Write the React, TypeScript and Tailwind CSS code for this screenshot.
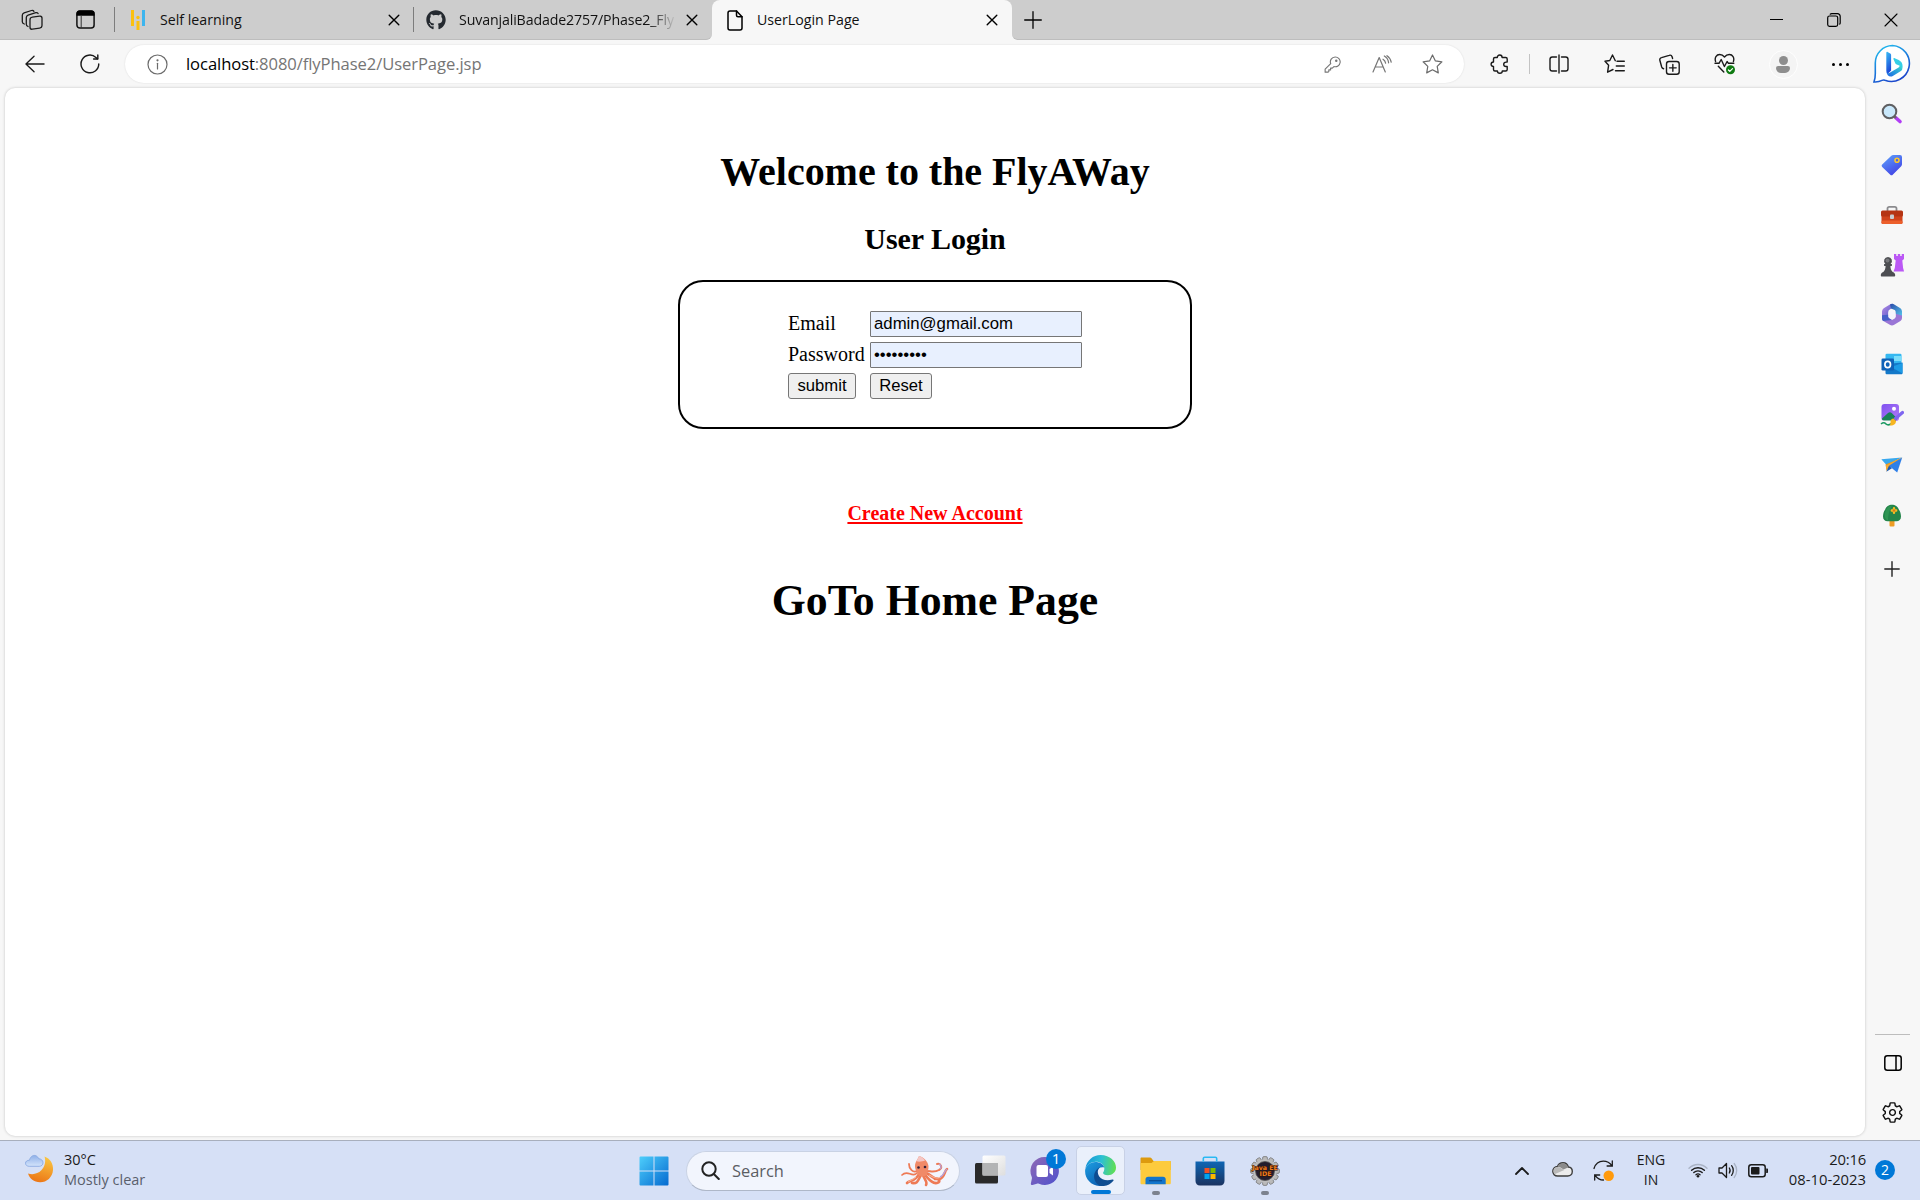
import React from "react";
import type { ReactNode } from "react";
import { FaGithub } from "react-icons/fa";
import { IoSettingsOutline } from "react-icons/io5";

const SANS = "font-['Open_Sans','Noto_Sans',sans-serif]";
const SERIF = "font-['Liberation_Serif',serif]";
const ARIAL = "font-['Liberation_Sans',sans-serif]";

type IconProps = { w: number; h?: number; box: string; children: ReactNode; sw?: number; className?: string };

/* Outline icon drawn with the current text colour. */
function Line({ w, h = w, box, children, sw = 1.4, className = "" }: IconProps) {
  return (
    <svg
      width={w}
      height={h}
      viewBox={box}
      fill="none"
      stroke="currentColor"
      strokeWidth={sw}
      strokeLinecap="round"
      strokeLinejoin="round"
      className={`block shrink-0 ${className}`}
    >
      {children}
    </svg>
  );
}

function Slot({ className, children }: { className: string; children: ReactNode }) {
  return <div className={`flex h-full shrink-0 items-center justify-center ${className}`}>{children}</div>;
}

function TabClose() {
  return (
    <Line w={12} box="0 0 12 12" sw={1.4} className="text-black">
      <path d="M1.2 1.2l9.600 9.600M10.800 1.200L1.200 10.800" />
    </Line>
  );
}

function TabStrip() {
  return (
    <div className="flex h-10 w-full shrink-0 bg-[#f7f7f7]">
      <div className="flex h-full w-[712px] shrink-0 items-center rounded-br-[6px] border-b border-[#bdbdbd] bg-[#cdcdcd]">
        <Slot className="w-[42px] ml-[11px]">
          <Line w={22} box="0 0 22 22" sw={1.3} className="text-[#1b1b1b]">
            <rect x="9" y="7.5" width="12" height="12" rx="2.4" transform="skewY(-8) translate(0 2.3)" />
            <path d="M7 17.5C5.7 17 5.3 16.400 5.300 15.300V8.600c0-1.300.6-2 1.800-2.400l7.700-2.500c1-.3 1.800 0 2.300.8" />
            <path d="M3.300 15C1.900 14.600 1.300 13.900 1.300 12.700V6.300c0-1.300.6-2 1.800-2.400L10.500 1.500c1-.3 1.900 0 2.400.9" />
          </Line>
        </Slot>
        <Slot className="w-[42px] ml-[11px]">
          <svg width="19" height="19" viewBox="0 0 19 19" className="block">
            <rect x=".9" y=".9" width="17.200" height="17.200" rx="3" fill="none" stroke="#111" strokeWidth="1.500" />
            <path d="M.5 5.800V3.500A3 3 0 0 1 3.500.5h12a3 3 0 0 1 3 3v2.300z" fill="#000" />
            <path d="M5.200 6v12" stroke="#333" strokeWidth="1" />
          </svg>
        </Slot>
        <div className="ml-2 h-[25px] w-px bg-[#7d7d7d]" />
        <svg width="14" height="22" viewBox="0 0 14 22" className="ml-4 block">
          <rect x="0" y="1" width="3" height="16" fill="#fcc10f" />
          <rect x="11" y="1" width="3" height="16" fill="#3db5ee" />
          <rect x="5.500" y="12" width="3" height="9" fill="#fcc10f" />
          <circle cx="7" cy="8.500" r="1.700" fill="#fcc10f" />
        </svg>
        <div className={`${SANS} ml-[15px] w-[228px] text-[14.2px] leading-5 text-[#111]`}>Self learning</div>
        <TabClose />
        <div className="ml-[13px] h-[25px] w-px bg-[#7d7d7d]" />
        <FaGithub size={20} color="#24292f" className="ml-[12px] shrink-0" />
        <div
          className={`${SANS} ml-[13px] w-[217px] whitespace-nowrap text-[14.2px] leading-5 tracking-[-0.13px] text-[#111] [mask-image:linear-gradient(to_right,#000_88%,transparent)]`}
        >
          SuvanjaliBadade2757/Phase2_Fly
        </div>
        <div className="ml-[10px]">
          <TabClose />
        </div>
      </div>
      <div className="h-full w-[300px] shrink-0 bg-[linear-gradient(#cdcdcd_50%,#f7f7f7_50%)]">
        <div className="flex h-full items-center rounded-t-[8px] bg-[#f7f7f7]">
          <Line w={16} h={21} box="0 0 16 21" sw={1.5} className="ml-[15px] text-black">
            <path d="M3 1h6.500L15 6.800V18a2 2 0 0 1-2 2H3a2 2 0 0 1-2-2V3a2 2 0 0 1 2-2z" />
            <path d="M9.500 1v4.300c0 .9.600 1.500 1.500 1.500h4" />
          </Line>
          <div className={`${SANS} ml-[14px] w-[229px] text-[14.2px] leading-5 text-[#111]`}>UserLogin Page</div>
          <TabClose />
        </div>
      </div>
      <div className="flex h-full flex-1 items-center rounded-bl-[6px] border-b border-[#bdbdbd] bg-[#cdcdcd]">
        <Line w={18} box="0 0 18 18" sw={1.3} className="ml-[12px] text-black">
          <path d="M9 .7v16.600M.7 9h16.600" />
        </Line>
        <div className="flex-1" />
        <Slot className="w-[57px]">
          <div className="h-[1.5px] w-[13px] bg-black" />
        </Slot>
        <Slot className="w-[57px]">
          <Line w={14} box="0 0 14 14" sw={1.2} className="text-black">
            <rect x=".7" y="3" width="10" height="10.300" rx="1.800" />
            <path d="M3.200 1.200c.5-.4.900-.5 1.500-.5h5.800A2.700 2.700 0 0 1 13.200 3.400v6.300c0 .6-.2 1-.5 1.400" />
          </Line>
        </Slot>
        <Slot className="w-[58px]">
          <Line w={14} box="0 0 14 14" sw={1.1} className="text-black">
            <path d="M1 1l12 12M13 1L1 13" />
          </Line>
        </Slot>
      </div>
    </div>
  );
}

function BingLogo() {
  return (
    <svg width="40" height="40" viewBox="0 0 40 40" className="block">
      <defs>
        <linearGradient id="bRing" x1="0" y1="0" x2=".5" y2="1">
          <stop offset="0" stopColor="#22c7f0" />
          <stop offset=".6" stopColor="#1a78dc" />
          <stop offset="1" stopColor="#1c49cc" />
        </linearGradient>
        <linearGradient id="bStem" x1="0" y1="0" x2=".3" y2="1">
          <stop offset="0" stopColor="#38bdf6" />
          <stop offset="1" stopColor="#1b48d8" />
        </linearGradient>
        <linearGradient id="bBody" x1="0" y1="1" x2="1" y2="0">
          <stop offset="0" stopColor="#1c63e6" />
          <stop offset="1" stopColor="#38dcd0" />
        </linearGradient>
      </defs>
      <path
        d="M20.500 1.500a18 18 0 1 1-7.500 34.800c-1.200-.5-2-.4-3 .1-2.300 1.200-5 1.700-8 1.500 1-2.600 1.300-5 1.300-8.400V19A17.500 17.500 0 0 1 20.500 1.500z"
        fill="#fff"
        stroke="url(#bRing)"
        strokeWidth="1.600"
      />
      <path d="M14.300 8.700c0-.8.700-1 1.300-.7l2.600 1.500c.7.400.9.800.9 1.600v15.500l-3.300 3.200c-1.200-.8-1.500-2-1.500-3.600z" fill="url(#bStem)" />
      <path d="M21.500 15.300c-.3-.9.400-1.400 1.200-1.100l4 1.900c2.700 1.300 3.900 3.500 3.900 6.100 0 .9-.1 1.700-.4 2.300-.9-1.900-2-2.600-3.600-3.300l-2.400-1c-.6-.2-.8-.6-1-1.100z" fill="#35cfe6" />
      <path d="M14.500 27.500c.5 1.700 1.900 2 3.200 1.300l8.500-5c1-.6 1.500-1.600 1.400-2.300 1.600.6 2.800 1.900 2.700 3.200-.1 1-.7 1.900-1.800 2.600l-7.700 4.600c-2.700 1.600-6.300-.2-6.300-4.400z" fill="url(#bBody)" />
    </svg>
  );
}

function Toolbar() {
  return (
    <div className="flex h-12 w-full shrink-0 items-center bg-[#f7f7f7] text-[#1a1a1a]">
      <Slot className="w-[50px] ml-[10px]">
        <Line w={20} h={18} box="0 0 21 18" sw={1.4}>
          <path d="M20 9H1M9.500.8L1 9l8.500 8.200" />
        </Line>
      </Slot>
      <Slot className="w-[50px] ml-[5px]">
        <Line w={20} box="0 0 21 21" sw={1.5}>
          <path d="M19.700 10.500A9.300 9.300 0 1 1 16.700 3.600l1.700 1.500" />
          <path d="M18.700 1v4.300h-4.400" />
        </Line>
      </Slot>
      <div className="ml-[10px] flex h-[38px] w-[1339px] items-center rounded-full bg-white shadow-[0_0_2px_rgba(0,0,0,0.12)]">
        <Line w={21} box="0 0 21 21" sw={1.2} className="ml-[22px] text-[#6b6b6b]">
          <circle cx="10.500" cy="10.500" r="9.500" />
          <path d="M10.500 9.300v5.700" />
          <circle cx="10.500" cy="6.300" r=".5" fill="currentColor" />
        </Line>
        <div className={`${SANS} ml-[18px] flex-1 whitespace-nowrap text-[16.6px] leading-6 tracking-[-0.08px] text-[#757575]`}>
          <span className="text-black">localhost</span>:8080/flyPhase2/UserPage.jsp
        </div>
        <Slot className="w-[50px]">
          <Line w={17} box="0 0 18 18" sw={1.2} className="text-[#767676]">
            <path d="M11.800 1A5.200 5.200 0 1 1 10.500 11.200L8.800 12.800H7v1.900H5.100v1.800l-.7.600H1.200V14l5.900-5.900A5.200 5.200 0 0 1 11.800 1z" />
            <circle cx="13" cy="5" r=".7" fill="currentColor" />
          </Line>
        </Slot>
        <Slot className="w-[50px]">
          <Line w={20} h={18} box="0 0 20 18" sw={1.2} className="text-[#767676]">
            <path d="M1 17L7.200 2.500 13.300 17M3.300 12h7.800" />
            <path d="M11 4.200c1.500.9 2.300 2.200 2.600 4M12.300 1c2.500 1.400 4 3.700 4.300 6.800M15 .7c2.300 1.500 3.700 3.700 4.200 6.500" />
          </Line>
        </Slot>
        <Slot className="w-[50px] mr-[7px]">
          <Line w={21} h={20} box="0 0 21 20" sw={1.2} className="text-[#6b6b6b]">
            <path d="M10.500 1l2.900 5.900 6.500.9-4.700 4.600 1.100 6.500-5.800-3.100-5.800 3.100 1.100-6.500L1.100 7.800l6.500-.9z" />
          </Line>
        </Slot>
      </div>
      <Slot className="w-[50px] ml-[11px]">
        <Line w={20} box="0 0 20 20" sw={1.4}>
          <path d="M7.300 3.500C7.300 2 8.300 1 9.700 1s2.400 1 2.400 2.500h3.600c.9 0 1.500.6 1.500 1.500v3.100h-1.100c-1.500 0-2.400.9-2.400 2.200s.9 2.200 2.400 2.200h1.100v3c0 .9-.6 1.500-1.500 1.500h-3.400c0 1.300-1 2.200-2.400 2.200s-2.500-.9-2.500-2.200H5c-.9 0-1.500-.6-1.500-1.500v-3c-1.400 0-2.400-.9-2.400-2.300S2.100 8 3.500 8V5c0-.9.600-1.500 1.500-1.500z" />
        </Line>
      </Slot>
      <div className="ml-[4px] h-5 w-px bg-[#c3c3c3]" />
      <Slot className="w-[50px] ml-[4px]">
        <Line w={20} box="0 0 20 20" sw={1.4}>
          <path d="M7.500 3H3.300C2 3 1 4 1 5.300v9.400C1 16 2 17 3.300 17h4.200M12.500 3h4.200C18 3 19 4 19 5.300v9.400c0 1.300-1 2.300-2.300 2.300h-4.200" />
          <path d="M10 1v18" />
        </Line>
      </Slot>
      <Slot className="w-[55px] ml-[3px]">
        <Line w={21} h={20} box="0 0 21 20" sw={1.4}>
          <path d="M11.300 6.900L9 6.600 7.200 2.300c-.3-.7-1-.7-1.300 0L5.300 6.300l-4.200.9 3.200 4.300-.8 6.500 5.200-2.500" className="hidden" />
          <path d="M11.300 6.700L8.500 1 5.800 6.500 1 7.300l3.600 4-1 6.900L9 15.500" />
          <path d="M13 7.200h7.300M12.300 12h8M11.500 16.800h8.800" />
        </Line>
      </Slot>
      <Slot className="w-[55px]">
        <Line w={21} box="0 0 21 21" sw={1.4}>
          <rect x="7.500" y="7.500" width="12.700" height="12.700" rx="2.500" />
          <path d="M13.850 10.500v6.700M10.500 13.850h6.700" />
          <path d="M4.600 14.700A2.500 2.500 0 0 1 2.700 13L.9 6.500a2.300 2.300 0 0 1 1.600-2.900L10.200 1.300A2.300 2.300 0 0 1 13.100 2.700l.5 1.800" />
        </Line>
      </Slot>
      <Slot className="w-[55px]">
        <Line w={22} h={22} box="0 0 22 22" sw={1.4}>
          <path d="M1.600 8.500C.3 4.600 2.400 1.500 5.700 1.500c2 0 3.500.9 4.800 2.500 1.300-1.600 2.800-2.500 4.800-2.500 3.300 0 5.400 3.100 4.100 7" />
          <path d="M1 10.300h4l2.200-3.800 3.200 7 2.700-5 1.300 1.800h5.400M4.300 13.300l5.500 5.700" />
          <circle cx="16.500" cy="16.800" r="4.500" fill="#0f7b12" stroke="none" />
          <path d="M14.400 17l1.400 1.400 2.700-2.800" stroke="#fff" strokeWidth="1.200" />
        </Line>
      </Slot>
      <Slot className="w-[62px]">
        <div className="flex h-[29px] w-[29px] flex-col items-center justify-center gap-[1px] rounded-full border border-white bg-[#f4f4f4]">
          <div className="h-[9px] w-[9px] rounded-full bg-[#8e8e8e]" />
          <div className="h-[7px] w-[14px] rounded-t-[3px] rounded-b-[7px] bg-[#8e8e8e]" />
        </div>
      </Slot>
      <Slot className="w-[53px] gap-[4px]">
        <div className="h-[3px] w-[3px] rounded-full bg-black" />
        <div className="h-[3px] w-[3px] rounded-full bg-black" />
        <div className="h-[3px] w-[3px] rounded-full bg-black" />
      </Slot>
      <Slot className="w-10 ml-[5px]">
        <BingLogo />
      </Slot>
    </div>
  );
}

function FieldBox({ children }: { children: ReactNode }) {
  return (
    <div
      className={`${ARIAL} flex h-[26px] items-center rounded-[1px] border border-[#767676] bg-[#e8f0fe] pb-[2px] pl-[3px] text-[16.75px] leading-[19px] text-black`}
    >
      {children}
    </div>
  );
}

function PushButton({ children, className }: { children: ReactNode; className: string }) {
  return (
    <button
      className={`${ARIAL} h-[26px] rounded-[3px] border border-[#767676] bg-[#efefef] pb-[2px] text-[16.67px] leading-[19px] text-black ${className}`}
    >
      {children}
    </button>
  );
}

function LoginPage() {
  return (
    <div className={`${SERIF} flex h-[1048px] w-[1860px] flex-col items-center rounded-[10px] bg-white text-black shadow-[0_0_3px_rgba(0,0,0,0.22)]`}>
      <h1 className="mt-[61px] text-[40px] font-bold leading-[46px] tracking-[-0.03px]">Welcome to the FlyAWay</h1>
      <h2 className="mt-[27px] text-[30px] font-bold leading-[34px] tracking-[-0.05px]">User Login</h2>
      <div className="mt-[24px] flex h-[149px] w-[514px] justify-center rounded-[25px] border-2 border-black pt-[29px]">
        <div className="grid h-[88px] w-[294px] grid-cols-[77px_212px] grid-rows-[26px_26px_26px] gap-[5px] text-[20px] leading-[25px]">
          <label>Email</label>
          <FieldBox>admin@gmail.com</FieldBox>
          <label>Password</label>
          <FieldBox>•••••••••</FieldBox>
          <PushButton className="w-[68px]">submit</PushButton>
          <PushButton className="w-[62px]">Reset</PushButton>
        </div>
      </div>
      <a className="mt-[73px] text-[20px] font-bold leading-[23px] text-[#ff0000] underline decoration-2 underline-offset-2">Create New Account</a>
      <div className="mt-[50px] text-[43.75px] font-bold leading-[50px]">GoTo Home Page</div>
    </div>
  );
}

function SideIcons() {
  return (
    <>
      <Slot className="!h-[50px]">
        <svg width="22" height="22" viewBox="0 0 22 22">
          <path d="M14.500 14.500l4.500 4" stroke="#b13df5" strokeWidth="3.600" strokeLinecap="round" />
          <path d="M12 12l3 3" stroke="#666" strokeWidth="2.400" />
          <circle cx="8.500" cy="8.500" r="6.800" fill="#c9e8fb" stroke="#5f5f62" strokeWidth="2" />
        </svg>
      </Slot>
      <Slot className="!h-[51px]">
        <svg width="22" height="22" viewBox="0 0 22 22">
          <defs>
            <linearGradient id="tag" x1="0" y1="0" x2=".6" y2="1">
              <stop offset="0" stopColor="#5ea5fb" />
              <stop offset="1" stopColor="#4345e6" />
            </linearGradient>
          </defs>
          <path d="M12.500 1H19a2 2 0 0 1 2 2v7.300c0 .8-.3 1.400-.8 1.900l-8.500 8.500c-.7.700-1.700.7-2.400 0L1.200 13c-.7-.7-.7-1.700 0-2.400l8.600-8.400C10.600 1.400 11.400 1 12.500 1z" fill="url(#tag)" />
          <circle cx="16" cy="6.300" r="2" fill="#4b62e8" stroke="#fbc72d" strokeWidth="1.600" />
        </svg>
      </Slot>
      <Slot className="!h-[50px]">
        <svg width="24" height="20" viewBox="0 0 24 20">
          <path d="M7.500 6V3.500c0-1 .7-1.700 1.700-1.700h5.600c1 0 1.700.7 1.700 1.700V6" fill="none" stroke="#8b8b8e" strokeWidth="1.800" />
          <rect x="1.500" y="9" width="21" height="10" rx="1.500" fill="#d0431b" />
          <rect x="1" y="5.500" width="22" height="6" rx="1.500" fill="#b53413" />
          <rect x="1.500" y="15.500" width="21" height="3.500" rx="1.500" fill="#ec5f2b" />
          <rect x="10" y="9.500" width="4" height="4.500" rx="1" fill="#c9cdd1" />
        </svg>
      </Slot>
      <Slot className="!h-[49px]">
        <svg width="24" height="24" viewBox="0 0 24 24">
          <path d="M14 1h2.300v2h1.500V1h2.400v2h1.500V1H24v5l-1.700 1.500.8 7.500 1 3.500H13.500l1.300-3.500.9-7.500L14 6z" fill="#bb58f5" />
          <path d="M8 4a4 4 0 0 1 2.600 7h1.300v2h-1.500c.1 2.700.7 4.500 2.300 6 1.700.7 2.500 1.700 2.500 3.200 0 .8-.4 1.300-1.200 1.300H2c-.8 0-1.200-.5-1.200-1.300 0-1.500.8-2.500 2.500-3.200 1.600-1.500 2.200-3.300 2.300-6H4.100v-2h1.300A4 4 0 0 1 8 4z" fill="#4d4e52" />
          <circle cx="7.500" cy="7.500" r="2" fill="#77787c" />
        </svg>
      </Slot>
      <Slot className="!h-[50px]">
        <svg width="22" height="23" viewBox="0 0 22 23">
          <defs>
            <linearGradient id="mA" x1="0" y1="0" x2="1" y2="1">
              <stop offset="0" stopColor="#b98be8" />
              <stop offset="1" stopColor="#3a4ebc" />
            </linearGradient>
            <linearGradient id="mB" x1="0" y1="0" x2="1" y2="1">
              <stop offset="0" stopColor="#2a4ba8" />
              <stop offset="1" stopColor="#53c1ea" />
            </linearGradient>
          </defs>
          <path d="M11.500.8c-1 0-1.800.2-2.600.7L2.700 5.300A4 4 0 0 0 1 8.500v6.800c0 1.200.5 2 1.300 2.700l5-2.500V8.700c0-.9.400-1.500 1.100-1.900L14.500 3z" fill="url(#mA)" />
          <path d="M21 8.200l-6.400 1v4.500c0 .8-.3 1.300-.9 1.700L11 17l-3.700-2.600-6 .5c0 1.300.3 2.300 1 3.100l6.500 3.800a4.300 4.300 0 0 0 4.400 0l6.200-3.700a4 4 0 0 0 1.600-3.200z" fill="#9a76d6" />
          <path d="M9 1.400a4.300 4.300 0 0 1 4.200 0l6.200 3.800A4 4 0 0 1 21 8.500v4l-6.400-1.800V8.600c0-.8-.3-1.300-.9-1.700L10 5.500z" fill="url(#mB)" />
          <path d="M2.300 18C1.500 17.200 1 16.200 1 15.200v-3l6.300-.5v2.200c0 .7.300 1.300.9 1.600l2.500 1.500z" fill="#4560c8" />
          <path d="M11 7.500l3.600 2v4.200L11 16l-3.600-2.300V9.500z" fill="#f4f4fb" />
        </svg>
      </Slot>
      <Slot className="!h-[50px]">
        <svg width="22" height="22" viewBox="0 0 22 22">
          <rect x="4.500" y=".8" width="16" height="12" rx="1.300" fill="#35b8f1" />
          <rect x="13" y="3" width="7.500" height="5" fill="#7addfb" />
          <path d="M4.500 11L21.500 9.500V20c0 .8-.5 1.300-1.300 1.300H6c-.8 0-1.500-.5-1.500-1.300z" fill="#1479c9" />
          <path d="M21.500 10v10.500L10 14z" fill="#1c9be6" />
          <rect x=".5" y="5.500" width="12.500" height="12" rx="1.300" fill="#0f62b8" />
          <ellipse cx="6.700" cy="11.500" rx="2.800" ry="3.100" fill="none" stroke="#fff" strokeWidth="1.700" />
        </svg>
      </Slot>
      <Slot className="!h-[51px]">
        <svg width="24" height="24" viewBox="0 0 24 24">
          <defs>
            <linearGradient id="pic" x1="0" y1="0" x2="1" y2="1">
              <stop offset="0" stopColor="#8052f0" />
              <stop offset="1" stopColor="#b07af6" />
            </linearGradient>
          </defs>
          <rect x="1.500" y="1" width="17.500" height="17" rx="3" fill="url(#pic)" />
          <circle cx="14" cy="5.700" r="2" fill="#fff" />
          <path d="M2 15.500l6-5.500c1.200-1 2.500-1 3.700 0l5.500 5.500-2 2.500H4.500C3 18 2 17 2 15.500z" fill="#178257" />
          <path d="M0 17.500h13v6H0z" fill="#f7f7f7" />
          <path d="M1 21c3-2.500 4-1 5 0s3.500 1.500 5-.5" fill="none" stroke="#1b9a62" strokeWidth="1.600" />
          <path d="M15.500 15.500L22.500 9.500" stroke="#7f66f0" strokeWidth="3.200" strokeLinecap="round" />
          <path d="M10.500 19c0-2.500 1.500-3.500 3-3.500l2.500 2.500c0 3-2.500 5-6.500 4.500 1-1 1-2 1-3.500z" fill="#f7b520" />
        </svg>
      </Slot>
      <Slot className="!h-[50px]">
        <svg width="23" height="18" viewBox="0 0 23 18">
          <path d="M1.300 3.200L22 1.500 6.500 9z" fill="#38a8ee" />
          <path d="M22.200 1.500L5.500 8.500l1 5.500z" fill="#e89520" />
          <path d="M22.200 1.500L9 9.500 6.300 15.500 6 9.500z" fill="#f4ac33" />
          <path d="M22.200 1.500L9 9.800l8.200 6.700z" fill="#2d7fe8" />
          <path d="M9 9.800l3 2.500-5.700 3.500z" fill="#1a5cb8" />
        </svg>
      </Slot>
      <Slot className="!h-[50px]">
        <svg width="20" height="23" viewBox="0 0 20 23">
          <rect x="7.500" y="15" width="5" height="7.500" rx="1" fill="#ee9d25" />
          <path d="M10 .8c3 0 6 2 6.800 4.700 1.500 2 2.200 4.500 2.200 7 0 3.300-2 4.700-4.500 4.700h-9C3 17.200 1 15.800 1 12.500c0-2.500.7-5 2.200-7C4 2.800 7 .8 10 .8z" fill="#23854a" />
          <path d="M3.500 7C5 3.500 7 2 10 1.500 8 5 6 10 6 16.500 3 15.500 2 12 3.500 7z" fill="#2f9553" />
          <path d="M12 4.300v4.400M9.800 6.500h4.400" stroke="#f6bc23" strokeWidth="2.400" strokeLinecap="round" />
          <circle cx="12" cy="6.500" r="1.200" fill="#d5791d" />
        </svg>
      </Slot>
      <Slot className="!h-[57px]">
        <Line w={16} box="0 0 16 16" sw={1.4} className="text-[#222]">
          <path d="M8 .8v14.400M.8 8h14.400" />
        </Line>
      </Slot>
    </>
  );
}

function Sidebar() {
  return (
    <div className="ml-[10px] flex h-[1048px] w-[35px] flex-col items-center">
      <div className="flex w-[33px] flex-col self-start pt-[1px]">
        <SideIcons />
      </div>
      <div className="flex-1" />
      <div className="h-px w-[35px] bg-[#bdbdbd]" />
      <Slot className="!h-[55px]">
        <Line w={18} h={16} box="0 0 18 16" sw={1.5} className="text-black">
          <rect x=".8" y=".8" width="16.400" height="14.400" rx="2.500" />
          <path d="M12 1v14" />
        </Line>
      </Slot>
      <Slot className="!h-[45px]">
        <IoSettingsOutline size={23} color="#111" />
      </Slot>
      <div className="h-[1px]" />
    </div>
  );
}

function EdgeLogo() {
  return (
    <svg width="31" height="31" viewBox="0 0 30 30" className="block">
      <defs>
        <linearGradient id="eTop" x1="0" y1=".5" x2="1" y2=".6">
          <stop offset="0" stopColor="#1695d8" />
          <stop offset=".5" stopColor="#2cc0d4" />
          <stop offset="1" stopColor="#62e04e" />
        </linearGradient>
        <linearGradient id="eLeft" x1="0" y1="0" x2=".6" y2="1">
          <stop offset="0" stopColor="#1e9fe2" />
          <stop offset="1" stopColor="#0c62b4" />
        </linearGradient>
        <linearGradient id="eDark" x1="0" y1="0" x2="1" y2="1">
          <stop offset="0" stopColor="#0b4c92" />
          <stop offset="1" stopColor="#124e90" />
        </linearGradient>
      </defs>
      <path d="M.3 13.500C1.500 5 8 0 15 0c9.500 0 15 6.500 15 12 0 4.500-3.500 7.500-7.800 7.500-3.200 0-4.700-1.200-4.700-2.200 0-.9 1.200-1.300 1.200-4.300 0-4-4-6.500-8.200-6.500-4.500 0-8.500 2.700-10.200 7z" fill="url(#eTop)" />
      <path d="M.2 14C1.500 9.500 5.500 6.700 10 6.700c4.300 0 8 2 8.700 5.500-3.700-1-6.500 1-7 4C11 21 14 27 18.500 29.600 8 32-1 24 .2 14z" fill="url(#eLeft)" />
      <path d="M14.500 11.800c-2.700 2.500-2.700 6-.9 8.700 2.500 3.500 7.200 4.800 12.900 3.200.9-.3 1.500.4 1 1.100C24.500 28.500 20 30.500 15.500 30c-4.500-1.500-7-5.500-6.700-10 .3-3.700 2.700-7 5.700-8.200z" fill="url(#eDark)" />
    </svg>
  );
}

function Octopus() {
  return (
    <svg width="49" height="32" viewBox="0 0 49 32" className="block">
      <g fill="none" stroke="#ee7a55" strokeWidth="2.600" strokeLinecap="round">
        <path d="M18 17C12 24 8 14 2 20" strokeWidth="1.700" />
        <path d="M19 19c-4 8-9 6-12 9" />
        <path d="M21 20c-3 5-3 9-9 8" />
        <path d="M25 20c4 4 7 9 12 8s1-6-2-4" />
        <path d="M26 18c6 2 7 7 13 6s5-8 8-10" />
        <path d="M26 16c5 0 8 2 13-1 4-2 2-7-2-6" strokeWidth="2" />
        <path d="M17 16C13 18 9 14 9 9" strokeWidth="1.800" />
        <path d="M23 20c1 4 5 7 3 10" />
      </g>
      <path d="M19 1c4 1 9 5 9.500 10 .3 4-1.500 6-2 9-2 2-7 2-9-1-.5-3-2.500-4-2.500-8 0-4 3-7 4-10z" fill="#f08a68" />
      <path d="M19 1c3 1 5 2.500 6 4.500-2 1-6 1.500-8.500.8C17.500 4 18.500 3 19 1z" fill="#f5c6c4" />
      <circle cx="18.500" cy="12.500" r="1.300" fill="#33203a" />
      <circle cx="25" cy="12" r="1.300" fill="#33203a" />
      <path d="M29 20c6 3 8 4 12 2M8 27c3-2 6-3 8-5" stroke="#f9b79b" strokeWidth="1" fill="none" />
      <path d="M40 22c4-1 4-6 7-8M39 9c2 1 3 3 1 5" stroke="#b7a1d8" strokeWidth="1.300" fill="none" />
    </svg>
  );
}

function JavaGear() {
  return (
    <svg width="30" height="30" viewBox="0 0 30 30" className="block">
      <g fill="#b9b9b9" stroke="#6f6f6f" strokeWidth=".7">
        {[0, 30, 60, 90, 120, 150].map((a) => (
          <rect key={a} x="12.600" y=".6" width="4.800" height="28.800" rx="1.300" transform={`rotate(${a} 15 15)`} />
        ))}
      </g>
      <circle cx="15" cy="15" r="11.800" fill="#bdbdbd" />
      <circle cx="15" cy="15" r="9.500" fill="#241d2c" stroke="#555" strokeWidth=".8" />
      <g fill="#ee7a1b" stroke="#2b1407" strokeWidth=".8" paintOrder="stroke" textAnchor="middle" fontFamily="DejaVu Sans" fontWeight="700">
        <text x="15" y="13.800" fontSize="6.300">Java EE</text>
        <text x="15.500" y="20.300" fontSize="6.300">IDE</text>
      </g>
    </svg>
  );
}

function Taskbar() {
  return (
    <div className={`${SANS} flex h-[60px] w-full shrink-0 items-center border-t border-[#a8afbd] bg-[#d6e0f6] text-[#1b1b1b]`}>
      <svg width="29" height="29" viewBox="0 0 29 29" className="mb-[4px] ml-[25px] block">
        <defs>
          <linearGradient id="moon" x1=".7" y1="0" x2=".4" y2="1">
            <stop offset="0" stopColor="#f9c642" />
            <stop offset="1" stopColor="#ec7616" />
          </linearGradient>
          <linearGradient id="cl" x1="0" y1="0" x2="0" y2="1">
            <stop offset="0" stopColor="#8fb0e8" />
            <stop offset="1" stopColor="#d4e4fb" />
          </linearGradient>
        </defs>
        <path d="M19.500 2.500C25 4.500 28.500 9.500 28 16 27.500 23.500 21.500 28.500 15 28.300 9 28 4.500 24.500 3 19.500c5 1.500 10 .3 13.300-3.200 3.700-4 4.700-8.800 3.200-13.800z" fill="url(#moon)" />
        <path d="M4.500 6.200C5.300 2.500 8 1 10 1.500c2 .3 3 1.700 3.700 3.200 2.300 0 4.300 1.700 4.300 4 0 2-1.500 3.600-3.700 3.600H4.200C2 12.300.5 11 .5 9.200c0-1.700 1.500-3 4-3z" fill="url(#cl)" stroke="#83a4e0" strokeWidth=".8" />
      </svg>
      <div className="mb-[2px] ml-[10px] w-[566px] text-[14.5px] leading-5">
        <div>30°C</div>
        <div className="text-[#5a5f6c]">Mostly clear</div>
      </div>
      <svg width="30" height="30" viewBox="0 0 30 30" className="ml-[9px] block">
        <defs>
          <linearGradient id="win" gradientUnits="userSpaceOnUse" x1="0" y1="0" x2="30" y2="30">
            <stop offset="0" stopColor="#4fd0fc" />
            <stop offset="1" stopColor="#0368cf" />
          </linearGradient>
        </defs>
        <path d="M.5 1.500a1 1 0 0 1 1-1h13V14.500H.5zM15.500.5h13a1 1 0 0 1 1 1v13h-14zM.5 15.500h14v14h-13a1 1 0 0 1-1-1zM15.500 15.500h14v13a1 1 0 0 1-1 1h-13z" fill="url(#win)" />
      </svg>
      <div className="ml-[17px] flex h-10 w-[274px] items-center rounded-full border border-[#c9d2e4] border-b-[#aeb7c8] bg-[#f2f5fd]">
        <Line w={19} box="0 0 19 19" sw={2} className="ml-[14px] text-[#222]">
          <circle cx="8" cy="8" r="6.700" />
          <path d="M12.800 13l5 5" />
        </Line>
        <div className="ml-[12px] flex-1 text-[16.4px] leading-6 text-[#5b5d63]">Search</div>
        <div className="mr-[10px]">
          <Octopus />
        </div>
      </div>
      <svg width="31" height="29" viewBox="0 0 31 29" className="mb-[2px] ml-[15px] block">
        <defs>
          <linearGradient id="tv" x1="0" y1="0" x2="1" y2="1">
            <stop offset="0" stopColor="#fff" />
            <stop offset="1" stopColor="#dedede" />
          </linearGradient>
        </defs>
        <rect x="0" y="8" width="23" height="20.500" rx="1.500" fill="#2a2a2a" />
        <rect x="7.500" y=".5" width="23" height="20" rx="1.500" fill="url(#tv)" />
        <rect x="7.500" y="8" width="15.500" height="12.500" fill="#b3b4b5" />
      </svg>
      <div className="relative ml-[24px] h-[30px] w-[30px]">
        <svg width="30" height="30" viewBox="0 0 30 30" className="block">
          <defs>
            <linearGradient id="chat" x1="0" y1="0" x2="1" y2="1">
              <stop offset="0" stopColor="#8f6ab5" />
              <stop offset="1" stopColor="#4f50cc" />
            </linearGradient>
          </defs>
          <path d="M15 1a14 14 0 1 1-6 26.700c-.8-.3-1.400-.3-2.200 0L2.500 29C1.300 29.300.6 28.500.9 27.300l1-4.700c.1-.7 0-1.300-.3-2A14 14 0 0 1 15 1z" fill="url(#chat)" />
          <rect x="6.500" y="9" width="11.500" height="12" rx="2" fill="#fff" />
          <path d="M19.500 13l3.500-2.200v8.600L19.500 17z" fill="#fff" />
        </svg>
        <div className="absolute -top-[7px] left-[16px] flex h-5 w-5 items-center justify-center rounded-full bg-[#0078d7] text-[15px] leading-none text-white">1</div>
      </div>
      <div className="ml-[16px] flex h-[49px] w-[49px] flex-col items-center justify-end rounded-[5px] border border-[#c8d1e6] bg-[#eaf0fb]">
        <EdgeLogo />
        <div className="mt-[4px] h-[4px] w-5 rounded-full bg-[#0078d7]" />
      </div>
      <div className="ml-[15px] flex h-[49px] flex-col items-center justify-end">
        <svg width="31" height="28" viewBox="0 0 31 28" className="block">
          <path d="M.5 1.500C.5.800 1 .5 1.500.5H10c.7 0 1 .2 1.500.7L13.500 4H30c.5 0 .8.300.8 1v8H.5z" fill="#dd9a0e" />
          <path d="M.5 6h11l2.500-2H30c.5 0 .8.300.8 1v21c0 .8-.5 1.300-1.300 1.300H1.800C1 27.300.5 26.800.5 26z" fill="#fdcb3d" />
          <path d="M5.500 22.500c0-1.700 1-2.700 2.700-2.700H23c1.700 0 2.700 1 2.700 2.700v4.800H5.500z" fill="#1275cc" />
          <path d="M9 23.700h13" stroke="#0b4d92" strokeWidth="1.300" />
        </svg>
        <div className="mt-[6px] h-[4px] w-2 rounded-full bg-[#7c828e]" />
      </div>
      <svg width="30" height="30" viewBox="0 0 30 30" className="ml-[24px] block">
        <defs>
          <linearGradient id="store" x1="0" y1="0" x2="0" y2="1">
            <stop offset="0" stopColor="#0f66b4" />
            <stop offset="1" stopColor="#1b3360" />
          </linearGradient>
        </defs>
        <path d="M.5 5.500h29V25c0 2.500-1.700 4.500-4.500 4.500H5C2.200 29.500.5 27.500.5 25z" fill="url(#store)" />
        <path d="M8.300 5.500V2.500c0-.8.500-1.300 1.300-1.300h10.800c.8 0 1.300.5 1.300 1.300v3" fill="none" stroke="#2bb9f3" strokeWidth="1.600" />
        <rect x="9.500" y="12" width="5" height="5" fill="#f25022" />
        <rect x="15.500" y="12" width="5" height="5" fill="#7fba00" />
        <rect x="9.500" y="18" width="5" height="5" fill="#00a4ef" />
        <rect x="15.500" y="18" width="5" height="5" fill="#ffb900" />
      </svg>
      <div className="ml-[25px] flex h-[49px] flex-col items-center justify-end">
        <JavaGear />
        <div className="mt-[5px] h-[4px] w-2 rounded-full bg-[#7c828e]" />
      </div>
      <div className="flex-1" />
      <Line w={14} h={8} box="0 0 14 8" sw={1.8}>
        <path d="M1 7l6-6 6 6" />
      </Line>
      <svg width="21" height="15" viewBox="0 0 21 15" className="ml-[23px] mb-[2px] block">
        <path d="M5.500 4.500C6.500 2 8.500.8 11 .8c2.800 0 4.700 1.700 5.300 4.200 2.300.2 4 2 4 4.500 0 2.600-2 4.500-4.500 4.500H5.500C2.800 14 .8 12 .8 9.300c0-2.600 2-4.700 4.700-4.800z" fill="#ececec" stroke="#3e3e3e" strokeWidth="1.400" />
        <path d="M5.500 4.800C6.500 2.200 8.500 1.300 11 1.300c2.600 0 4.500 1.700 5 4.200l-4.500 2-3-2z" fill="#8b8b8b" />
        <path d="M1.500 9c0-2.300 1.700-4 4-4 1 0 2 .2 2.800.7l4 2.400L3 12C2 11.400 1.500 10.300 1.500 9z" fill="#b9b9b9" />
      </svg>
      <svg width="21" height="21" viewBox="0 0 21 21" className="ml-[20px] block" fill="none" stroke="#1b1b1b" strokeWidth="1.300" strokeLinecap="round">
        <path d="M1 8.500C2.500 3.800 6 1.200 10.300 1.200c4 0 6.700 1.800 8.700 4.600M19.300 1v5h-5.200" />
        <path d="M1.700 20v-5h5M2.200 15.300c2 3 4.500 4.700 8.300 4.700" />
        <circle cx="15.700" cy="15.700" r="5.200" fill="#ff9a0c" stroke="none" />
      </svg>
      <div className="mb-[2px] ml-[21px] w-[32px] text-center text-[14px] leading-5">
        <div>ENG</div>
        <div>IN</div>
      </div>
      <svg width="20" height="15" viewBox="0 0 20 15" className="ml-[21px] block" fill="none" strokeWidth="1.400" strokeLinecap="round">
        <path d="M1 5.300C6 .2 14 .2 19 5.300" stroke="#aab3c5" />
        <path d="M3.600 7.300c3.600-3.500 9.200-3.500 12.800 0M5.800 9.600c2.400-2.300 6-2.300 8.400 0M8 11.700c1.200-1 2.800-1 4 0" stroke="#1b1b1b" />
        <circle cx="10" cy="13.200" r="1.300" fill="#1b1b1b" />
      </svg>
      <svg width="20" height="17" viewBox="0 0 20 17" className="ml-[10px] block" fill="none" stroke="#1b1b1b" strokeWidth="1.300" strokeLinecap="round" strokeLinejoin="round">
        <path d="M1 6v5h3l4.500 4.500v-14L4 6z" />
        <path d="M11.300 6c1 1.500 1 3.500 0 5M13.600 3.700c2.200 2.700 2.200 6.900 0 9.600" />
        <path d="M16.200 1.500c3.300 4.200 3.300 9.800 0 14" stroke="#aab3c5" />
      </svg>
      <svg width="21" height="14" viewBox="0 0 21 14" className="ml-[10px] block">
        <rect x=".8" y=".8" width="16.400" height="12" rx="2.500" fill="none" stroke="#1b1b1b" strokeWidth="1.500" />
        <rect x="3" y="3" width="8.500" height="7.600" rx="1" fill="#1b1b1b" />
        <path d="M18.200 4.500h.8c.6 0 1 .4 1 1v2.600c0 .6-.4 1-1 1h-.8z" fill="#1b1b1b" />
      </svg>
      <div className="mb-[3px] w-[97px] text-right text-[14.8px] leading-5">
        <div className="tracking-[-0.2px]">20:16</div>
        <div>08-10-2023</div>
      </div>
      <div className="ml-[9px] mr-[25px] mb-[1px] flex h-5 w-5 items-center justify-center rounded-full bg-[#0078d7] text-[14px] leading-none text-white">2</div>
    </div>
  );
}

export default function App() {
  return (
    <div className="flex h-[1200px] w-[1920px] flex-col overflow-hidden bg-[#f7f7f7]">
      <TabStrip />
      <Toolbar />
      <div className="flex h-[1052px] shrink-0 pl-[5px]">
        <LoginPage />
        <Sidebar />
      </div>
      <Taskbar />
    </div>
  );
}
